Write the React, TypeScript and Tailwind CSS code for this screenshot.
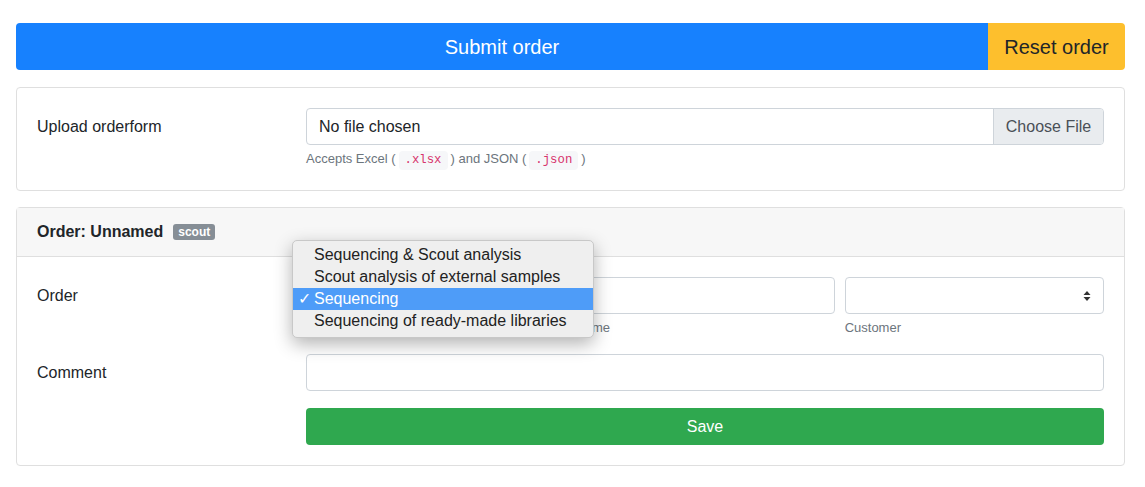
import { useState } from "react";

const projectTypes = [
  "Sequencing & Scout analysis",
  "Scout analysis of external samples",
  "Sequencing",
  "Sequencing of ready-made libraries",
];

function SelectArrows() {
  return (
    <svg width="8" height="12" viewBox="0 0 8 12" className="text-[#333]">
      <path d="M4 1 L7.5 5 L0.5 5 Z" fill="currentColor" />
      <path d="M4 11 L7.5 7 L0.5 7 Z" fill="currentColor" />
    </svg>
  );
}

function Code({ children }: { children: string }) {
  return (
    <code className="mx-[3px] inline-block rounded-[4px] bg-[#f6f7f9] px-[6px] font-['Liberation_Mono',monospace] text-[12.3px] leading-[19px] text-[#d6336c]">
      {children}
    </code>
  );
}

export default function App() {
  const [selected] = useState("Sequencing");

  return (
    <div className="min-h-[487px] bg-white font-['Liberation_Sans',Arial,sans-serif] text-[16px] text-[#212529]">
      <div className="ml-[16px] w-[1109px] pt-[23px]">
        {/* Top actions */}
        <div className="flex h-[47px] overflow-hidden rounded-[4px]">
          <button className="flex-1 bg-[#1781fe] text-[20px] text-white">Submit order</button>
          <button className="w-[137px] bg-[#fdbf2d] text-[20px] text-[#212529]">Reset order</button>
        </div>

        {/* Upload card */}
        <div className="mt-[17px] rounded-[4px] border border-[#dfdfdf] p-[20px]">
          <div className="flex">
            <div className="w-[269px] pt-[7px] leading-[24px]">Upload orderform</div>
            <div className="flex-1">
              <div className="flex h-[37px] overflow-hidden rounded-[4px] border border-[#ced4da]">
                <div className="flex flex-1 items-center px-[12px]">No file chosen</div>
                <div className="flex w-[110px] items-center justify-center border-l border-[#ced4da] bg-[#e9ecef] text-[#495057]">
                  Choose File
                </div>
              </div>
              <div className="mt-[4px] text-[13px] leading-[19px] text-[#6c757d]">
                Accepts Excel (<Code>.xlsx</Code>) and JSON (<Code>.json</Code>)
              </div>
            </div>
          </div>
        </div>

        {/* Order card */}
        <div className="mt-[16px] rounded-[4px] border border-[#dfdfdf]">
          <div className="flex h-[49px] items-center gap-[10px] border-b border-[#dfdfdf] bg-[#f7f7f7] px-[20px]">
            <span className="font-bold">Order: Unnamed</span>
            <span className="rounded-[3px] bg-[#868e96] px-[5px] text-[12px] font-bold leading-[16px] text-white">
              scout
            </span>
          </div>

          <div className="px-[20px] pb-[20px] pt-[20px]">
            <div className="flex">
              <div className="w-[269px] pt-[7px] leading-[24px]">Order</div>
              <div className="grid flex-1 grid-cols-3 gap-[10px]">
                <div className="relative">
                  {/* project type select, covered by its open menu */}
                  <div className="flex h-[37px] items-center justify-end rounded-[4px] border border-[#ced4da] px-[12px]">
                    <SelectArrows />
                  </div>
                  <div className="mt-[4px] h-[19px]" />

                  {/* Open native select menu */}
                  <div className="absolute left-[-14px] top-[-37px] z-10 w-[302px] rounded-[5px] border border-[#c8c8c8] bg-[#efefef] pb-[5px] pt-[3px] shadow-[0_6px_18px_rgba(0,0,0,0.3)]">
                    {projectTypes.map((t) => (
                      <div
                        key={t}
                        className={
                          t === selected
                            ? "relative h-[22px] bg-[#4e9cf8] pl-[21px] leading-[22px] text-white"
                            : "relative h-[22px] pl-[21px] leading-[22px] text-[#222]"
                        }
                      >
                        {t === selected && <span className="absolute left-[5px]">✓</span>}
                        {t}
                      </div>
                    ))}
                  </div>
                </div>
                <div>
                  <div className="h-[37px] rounded-[4px] border border-[#ced4da]" />
                  <div className="mt-[4px] text-[13px] leading-[20px] text-[#6c757d]">Name</div>
                </div>
                <div>
                  <div className="flex h-[37px] items-center justify-end rounded-[4px] border border-[#ced4da] px-[12px]">
                    <SelectArrows />
                  </div>
                  <div className="mt-[4px] text-[13px] leading-[20px] text-[#6c757d]">Customer</div>
                </div>
              </div>
            </div>

            <div className="mt-[16px] flex">
              <div className="w-[269px] pt-[7px] leading-[24px]">Comment</div>
              <div className="flex-1">
                <div className="h-[37px] rounded-[4px] border border-[#ced4da]" />
                <button className="mt-[17px] h-[37px] w-full rounded-[4px] bg-[#2fa84f] text-white">Save</button>
              </div>
            </div>
          </div>
        </div>
      </div>
    </div>
  );
}
